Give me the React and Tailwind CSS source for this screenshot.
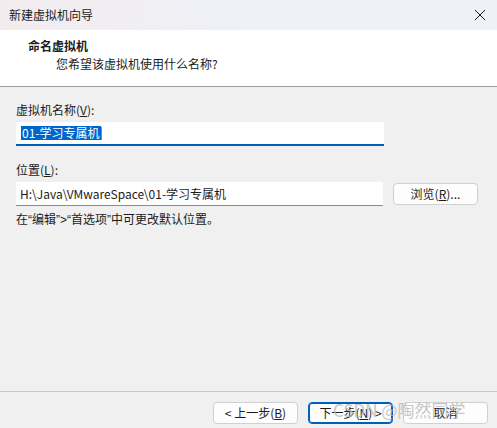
import React from "react";

const font = { fontFamily: '"Noto Sans CJK SC", "Noto Sans", sans-serif' };
const latin = { fontFamily: '"Liberation Sans", sans-serif' };

function Btn({ children, primary, className = "" }) {
  return (
    <button
      className={`h-[22px] w-[85px] rounded-[4px] text-[12px] leading-none text-[#1b1b1b] bg-[#fdfdfd] flex items-center justify-center ${
        primary ? "border border-[#005fb8] shadow-[inset_0_0_0_1px_#005fb8]" : "border border-[#d0d0d0]"
      } ${className}`}
    >
      {children}
    </button>
  );
}

export default function App() {
  return (
    <div style={font} className="w-[497px] h-[428px] flex flex-col bg-[#f0f0f0] text-[#1b1b1b] relative overflow-hidden">
      {/* title bar */}
      <div className="h-[30px] shrink-0 flex items-center justify-between pl-[9px] pr-[9px] bg-gradient-to-r from-[#f3ecef] via-[#eef1f7] to-[#eef2f8]">
        <span className="text-[12px]">新建虚拟机向导</span>
        <svg width="12" height="12" viewBox="0 0 12 12" className="mr-[2px]">
          <path d="M1 1L11 11M11 1L1 11" stroke="#1b1b1b" strokeWidth="1" />
        </svg>
      </div>

      {/* header */}
      <div className="h-[57px] shrink-0 bg-white border-b border-[#a0a0a0] pl-[28px] pt-[7px]">
        <div className="text-[12px] font-bold leading-[18px]">命名虚拟机</div>
        <div className="text-[12px] leading-[18px] pl-[28px]">您希望该虚拟机使用什么名称?</div>
      </div>

      {/* body */}
      <div className="flex-1 px-[16px] pt-[15px]">
        <div className="text-[12px] leading-[16px]">
          虚拟机名称(<span className="underline">V</span>):
        </div>
        <div className="mt-[4px] w-[368px] h-[24px] bg-white border-b-2 border-[#005fb8] flex items-center pl-[5px]">
          <span className="bg-[#0066cc] text-white text-[12px] leading-[14px] px-[1px]">01-学习专属机</span>
          <span className="w-[1px] h-[13px] bg-[#e07020]" />
        </div>

        <div className="mt-[16px] text-[12px] leading-[16px]">
          位置(<span className="underline">L</span>):
        </div>
        <div className="mt-[4px] flex items-center gap-[10px]">
          <div className="w-[367px] h-[24px] bg-white border-b border-[#8a8a8a] flex items-center pl-[4px] text-[12px]">
            H:\Java\VMwareSpace\01-学习专属机
          </div>
          <Btn>
            浏览(<span className="underline">R</span>)...
          </Btn>
        </div>
        <div className="mt-[5px] text-[12px] leading-[16px]">
          在<span style={latin}>“</span>编辑<span style={latin}>”&gt;“</span>首选项<span style={latin}>”</span>中可更改默认位置。
        </div>
      </div>

      {/* footer */}
      <div className="h-[37px] shrink-0 border-t border-[#c8c8c8] flex items-start justify-end gap-[10px] pr-[9px] pt-[10px]">
        <Btn>
          &lt; 上一步(<span className="underline">B</span>)
        </Btn>
        <Btn primary>
          下一步(<span className="underline">N</span>) &gt;
        </Btn>
        <Btn>取消</Btn>
      </div>

      {/* watermark */}
      <div className="absolute left-[333px] top-[398px] text-[17px] leading-[24px] text-[#b8b8b8]/80 pointer-events-none">
        CSDN @陶然同学
      </div>
    </div>
  );
}
